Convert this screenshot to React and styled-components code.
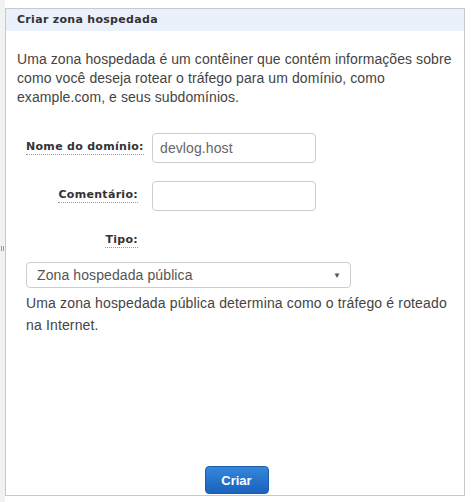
import styled, { createGlobalStyle } from "styled-components";

const GlobalStyle = createGlobalStyle`
  html, body {
    margin: 0;
    padding: 0;
    background: #ffffff;
  }
  body {
    font-family: "Liberation Sans", Arial, sans-serif;
  }
`;

const Page = styled.div`
  display: flex;
  width: 471px;
  height: 502px;
  background: #ffffff;
`;

const SideStrip = styled.div`
  width: 5px;
  height: 100%;
  background: #f2f2f2;
  position: relative;
`;

const StripMark = styled.span`
  position: absolute;
  left: 1px;
  top: 246px;
  width: 3px;
  height: 5px;
  border-left: 1px solid #9a9a9a;
  border-right: 1px solid #9a9a9a;
  box-sizing: border-box;
`;

const Panel = styled.section`
  margin-top: 8px;
  width: 460px;
  height: 488px;
  box-sizing: border-box;
  border: 1px solid #c9c9c9;
  display: flex;
  flex-direction: column;
`;

const PanelHeader = styled.h2`
  margin: 0;
  height: 22px;
  line-height: 22px;
  padding-left: 11px;
  background: #eaf1fb;
  font-family: "DejaVu Sans", Verdana, sans-serif;
  font-weight: bold;
  font-size: 11px;
  letter-spacing: 0.3px;
  color: #333333;
`;

const Intro = styled.p`
  margin: 19px 4px 0 11px;
  font-size: 14px;
  letter-spacing: 0.08px;
  line-height: 19px;
  color: #444444;
`;

const FormGrid = styled.div`
  display: grid;
  grid-template-columns: 112px 164px;
  column-gap: 14px;
  row-gap: 18px;
  padding-left: 20px;
  margin-top: 26px;
`;

const LabelCell = styled.div`
  padding-top: ${({ $offset }) => $offset}px;
  text-align: right;
  white-space: nowrap;
`;

const Label = styled.label`
  font-family: "DejaVu Sans", Verdana, sans-serif;
  font-weight: bold;
  font-size: 11px;
  letter-spacing: 0.3px;
  color: #333333;
  border-bottom: 1px dotted #9a9a9a;
  padding-bottom: 1px;
`;

const TextInput = styled.input`
  width: 164px;
  height: 30px;
  box-sizing: border-box;
  border: 1px solid #cccccc;
  border-radius: 4px;
  padding: 0 7px;
  font-family: "Liberation Sans", Arial, sans-serif;
  font-size: 14px;
  letter-spacing: 0.1px;
  color: #666666;
  outline: none;
`;

const TypeSection = styled.div`
  padding: 0 14px 0 20px;
`;

const SelectBox = styled.div`
  margin-top: 15px;
  width: 325px;
  height: 26px;
  box-sizing: border-box;
  border: 1px solid #cccccc;
  border-radius: 4px;
  display: flex;
  align-items: center;
  justify-content: space-between;
  padding: 0 9px 0 10px;
  font-size: 14px;
  letter-spacing: 0.1px;
  color: #555555;
`;

const Arrow = styled.span`
  font-size: 8px;
  color: #555555;
`;

const Hint = styled.p`
  margin: 4px 0 0 0;
  font-size: 14px;
  letter-spacing: 0.15px;
  line-height: 22px;
  color: #444444;
`;

const Footer = styled.div`
  margin-top: auto;
  display: flex;
  justify-content: center;
  padding-left: 3px;
  padding-bottom: 1px;
`;

const PrimaryButton = styled.button`
  width: 64px;
  height: 28px;
  border: 1px solid #1b5cab;
  border-radius: 4px;
  background: linear-gradient(#3586dc, #1a62bd);
  color: #ffffff;
  font-family: "Liberation Sans", Arial, sans-serif;
  font-weight: bold;
  font-size: 13px;
  padding: 0;
`;

const App = () => {
  return (
    <>
      <GlobalStyle />
      <Page>
        <SideStrip>
          <StripMark />
        </SideStrip>
        <Panel>
          <PanelHeader>Criar zona hospedada</PanelHeader>
          <Intro>
            Uma zona hospedada é um contêiner que contém informações sobre
            como você deseja rotear o tráfego para um domínio, como
            example.com, e seus subdomínios.
          </Intro>
          <FormGrid>
            <LabelCell $offset={3}>
              <Label htmlFor="domain">Nome do domínio:</Label>
            </LabelCell>
            <TextInput id="domain" defaultValue="devlog.host" />
            <LabelCell $offset={3}>
              <Label htmlFor="comment">Comentário:</Label>
            </LabelCell>
            <TextInput id="comment" />
            <LabelCell $offset={0}>
              <Label>Tipo:</Label>
            </LabelCell>
          </FormGrid>
          <TypeSection>
            <SelectBox>
              <span>Zona hospedada pública</span>
              <Arrow>▼</Arrow>
            </SelectBox>
            <Hint>
              Uma zona hospedada pública determina como o tráfego é roteado
              na Internet.
            </Hint>
          </TypeSection>
          <Footer>
            <PrimaryButton>Criar</PrimaryButton>
          </Footer>
        </Panel>
      </Page>
    </>
  );
};

export default App;
